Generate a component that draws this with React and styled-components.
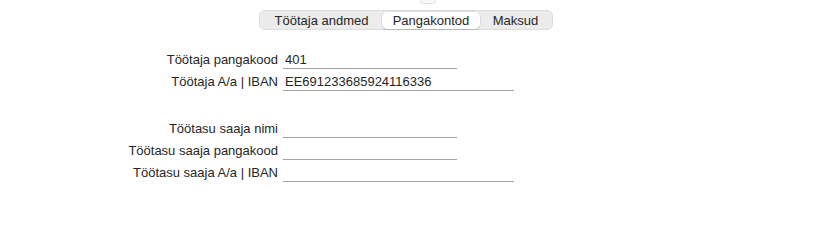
import React from "react";
import styled, { createGlobalStyle } from "styled-components";

const Global = createGlobalStyle`
  html, body { margin: 0; padding: 0; background: #ffffff; }
  body { font-family: "Liberation Sans", Arial, sans-serif; color: #262626; }
`;

const Page = styled.div`
  width: 820px;
  height: 229px;
  background: #fff;
  overflow: hidden;
`;

const TopStub = styled.div`
  margin-left: 420px;
  width: 14px;
  height: 3px;
  border: 1px solid #dedede;
  border-top: none;
  border-radius: 0 0 4px 4px;
  background: #fafafa;
`;

const Segmented = styled.div`
  margin: 6px 0 0 259px;
  display: inline-flex;
  height: 20px;
  box-sizing: border-box;
  background: #ececec;
  border: 1px solid #dcdcdc;
  border-radius: 6px;
  padding: 0 1px;
  align-items: center;
`;

const Segment = styled.div`
  width: ${(p) => p.$w}px;
  height: 17px;
  box-sizing: border-box;
  display: flex;
  align-items: center;
  justify-content: center;
  font-size: 13px;
  color: #262626;
  border-radius: 5px;
  background: ${(p) => (p.$active ? "#ffffff" : "transparent")};
  box-shadow: ${(p) =>
    p.$active ? "0 0 0 0.5px rgba(0,0,0,0.12), 0 1px 1px rgba(0,0,0,0.12)" : "none"};
`;

const Form = styled.div`
  margin-top: 19px;
  display: flex;
  flex-direction: column;
`;

const Group = styled.div`
  display: flex;
  flex-direction: column;
  & + & { margin-top: 25px; }
`;

const Row = styled.div`
  display: grid;
  grid-template-columns: 278px ${(p) => p.$w}px;
  column-gap: 5px;
  height: 22px;
  align-items: center;
`;

const Label = styled.div`
  text-align: right;
  font-size: 13px;
  line-height: 16px;
  color: #262626;
  white-space: nowrap;
`;

const Field = styled.div`
  height: 18px;
  box-sizing: border-box;
  border-bottom: 1px solid #a3a3a3;
  font-size: 13px;
  line-height: 17px;
  padding-left: 2px;
  color: #262626;
  white-space: nowrap;
`;

const tabs = [
  { label: "Töötaja andmed", w: 121 },
  { label: "Pangakontod", w: 98, active: true },
  { label: "Maksud", w: 71 },
];

const groups = [
  [
    { label: "Töötaja pangakood", value: "401", w: 174 },
    { label: "Töötaja A/a | IBAN", value: "EE691233685924116336", w: 231 },
  ],
  [
    { label: "Töötasu saaja nimi", value: "", w: 174 },
    { label: "Töötasu saaja pangakood", value: "", w: 174 },
    { label: "Töötasu saaja A/a | IBAN", value: "", w: 231 },
  ],
];

export default function App() {
  return (
    <Page>
      <Global />
      <TopStub />
      <Segmented>
        {tabs.map((t) => (
          <Segment key={t.label} $w={t.w} $active={t.active}>
            {t.label}
          </Segment>
        ))}
      </Segmented>
      <Form>
        {groups.map((g, i) => (
          <Group key={i}>
            {g.map((r) => (
              <Row key={r.label} $w={r.w}>
                <Label>{r.label}</Label>
                <Field>{r.value}</Field>
              </Row>
            ))}
          </Group>
        ))}
      </Form>
    </Page>
  );
}
